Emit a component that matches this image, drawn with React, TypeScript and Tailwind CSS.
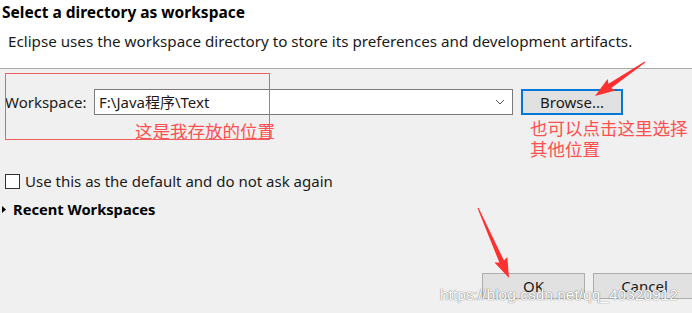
import React from "react";

const font = { fontFamily: '"Noto Sans", "Noto Sans CJK SC", sans-serif' };
const cjk = { fontFamily: '"Noto Sans CJK SC", sans-serif' };

export default function App() {
  return (
    <div
      className="relative w-[692px] h-[313px] overflow-hidden bg-[#f0f0f0] text-[#1a1a1a]"
      style={font}
    >
      {/* header */}
      <div className="h-[69px] bg-white border-b border-[#a8a8a8] flex flex-col">
        <div className="pl-[2px] pt-[1px] text-[15.5px] leading-[22px] font-bold text-black">
          Select a directory as workspace
        </div>
        <div className="pl-[8px] mt-[8px] text-[15.2px] leading-[20px]">
          Eclipse uses the workspace directory to store its preferences and development artifacts.
        </div>
      </div>

      {/* body */}
      <div className="flex flex-col">
        <div className="mt-[20px] flex items-center h-[26px]">
          <span className="pl-[5px] w-[94px] text-[15px] leading-[20px]">Workspace:</span>
          <div className="w-[419px] h-[26px] bg-white border border-[#7a7a7a] flex items-center justify-between pl-[4px] pr-[7px]">
            <span className="text-[15px] leading-[20px]">F:\Java程序\Text</span>
            <svg width="10" height="6" viewBox="0 0 10 6" className="text-[#555]">
              <polyline points="1,1 5,5 9,1" fill="none" stroke="currentColor" strokeWidth="1" />
            </svg>
          </div>
          <div className="ml-[8px] w-[102px] h-[26px] bg-[#e1e1e1] border-2 border-[#0078d7] flex items-center justify-center text-[15px] leading-[20px]">
            Browse...
          </div>
        </div>

        <div className="mt-[57px] h-[18px] flex items-center pl-[5px]">
          <div className="w-[15px] h-[15px] bg-white border border-[#333]" />
          <span className="ml-[5px] text-[15px] leading-[18px]">
            Use this as the default and do not ask again
          </span>
        </div>

        <div className="mt-[10px] h-[18px] flex items-center pl-[2px]">
          <svg width="4" height="7" viewBox="0 0 4 7">
            <polygon points="0,0 4,3.5 0,7" fill="#000" />
          </svg>
          <span className="ml-[7px] text-[14.7px] leading-[18px] font-bold text-black">
            Recent Workspaces
          </span>
        </div>

        <div className="mt-[55px] flex justify-end gap-[8px] mr-[-4px]">
          <div className="w-[103px] h-[26px] bg-[#e1e1e1] border border-[#adadad] flex items-center justify-center text-[15px]">
            OK
          </div>
          <div className="w-[103px] h-[26px] bg-[#e1e1e1] border border-[#adadad] flex items-center justify-center text-[15px]">
            Cancel
          </div>
        </div>
      </div>

      {/* annotations */}
      <div className="absolute left-[135px] top-[120px] text-[17.5px] leading-[21px] text-[#ff5050]" style={cjk}>
        这是我存放的位置
      </div>
      <div className="absolute left-[530px] top-[117px] text-[17.5px] leading-[21px] text-[#ff5050]" style={cjk}>
        也可以点击这里选择
        <br />
        其他位置
      </div>

      <svg className="absolute left-0 top-0 pointer-events-none" width="692" height="313" viewBox="0 0 692 313">
        <rect x="5.5" y="73.5" width="264" height="66" fill="none" stroke="#f06060" strokeWidth="1" />
        <polygon
          points="644.7,61.6 608.5,83.8 607.6,79.0 595,96 615.4,90.6 611.3,88.0 645.3,62.4"
          fill="#ff3030"
        />
        <polygon
          points="477.5,208.2 499.4,262.6 494.5,262.5 509,278 507.3,256.9 504.0,260.6 478.5,207.8"
          fill="#ff3030"
        />
      </svg>

      <div
        className="absolute left-[440px] top-[285px] text-[15.5px] leading-[20px] text-white"
        style={{
          fontFamily: '"Liberation Sans", Arial, sans-serif',
          textShadow: "0 0 1px #777, 0 0 1px #777",
        }}
      >
        https://blog.csdn.net/qq_40320912
      </div>
    </div>
  );
}
